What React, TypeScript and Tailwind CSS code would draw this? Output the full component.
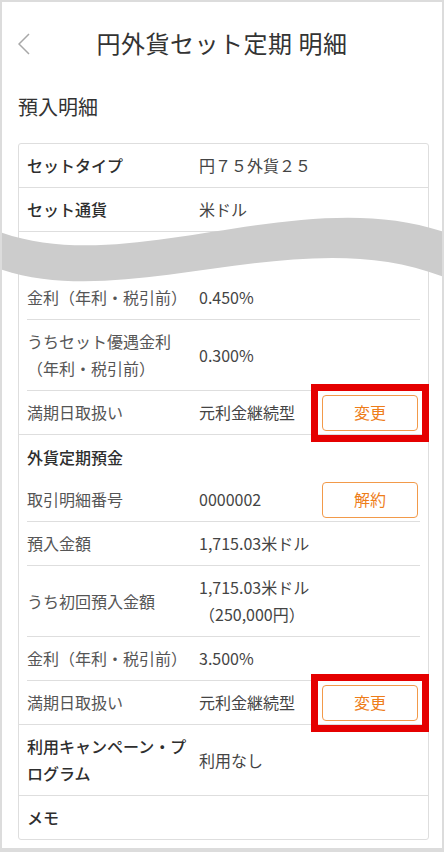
import React from 'react';

const font = { fontFamily: '"Noto Sans CJK JP", "Noto Sans", sans-serif' };

function ActionButton({ label, highlight }: { label: string; highlight?: boolean }) {
  return (
    <div className="relative shrink-0 -my-[5px] mr-[2px]">
      <button className="block w-[96px] h-[36px] rounded-[4px] border border-[#f29a4a] bg-white text-[16px] text-[#ee7d1a]">
        {label}
      </button>
      {/* red annotation box */}
      {highlight && <div className="absolute -inset-[11px] border-[7px] border-[#e50000] pointer-events-none" />}
    </div>
  );
}

function Row({
  label,
  value,
  strong,
  action,
  inset,
  last,
}: {
  label: React.ReactNode;
  value?: React.ReactNode;
  strong?: boolean;
  action?: React.ReactNode;
  inset?: boolean;
  last?: boolean;
}) {
  return (
    <div
      className={`flex items-center min-h-[43px] py-[8px] leading-[27px] text-[16px] ${inset ? '' : 'px-[8px]'} ${
        last ? '' : 'border-b border-[#dedede]'
      }`}
    >
      <div className={`w-[172px] shrink-0 pr-[4px] ${strong ? 'font-medium text-[#2e2e2e]' : 'text-[#555]'}`}>{label}</div>
      <div className="flex-1 text-[#444]">{value}</div>
      {action}
    </div>
  );
}

function GroupHeader({ title, h }: { title: string; h: string }) {
  return <div className={`flex items-center ${h} text-[16px] font-medium text-[#2e2e2e]`}>{title}</div>;
}

export default function App() {
  return (
    <div
      className="relative w-[444px] h-[852px] overflow-hidden bg-white border-[#dcdcdc] border-t-2 border-l-2 border-r-2 border-b-4"
      style={font}
    >
      {/* Header */}
      <header className="relative flex items-center justify-center h-[82px]">
        <svg className="absolute left-[16px] top-[31px]" width="12" height="22" viewBox="0 0 12 22" fill="none">
          <polyline points="11,1 1,11 11,21" stroke="#a8a8a8" strokeWidth="1.5" />
        </svg>
        <h1 className="text-[24px] text-[#333] tracking-[0.5px]">円外貨セット定期 明細</h1>
      </header>

      <h2 className="mt-[9px] ml-[16px] text-[20px] leading-[28px] text-[#333]">預入明細</h2>

      {/* Detail card */}
      <div className="mt-[22px] ml-[16px] w-[411px] rounded-[3px] border border-[#dedede]">
        <Row label="セットタイプ" value="円７５外貨２５" strong />
        <Row label="セット通貨" value="米ドル" strong />

        <div className="px-[8px] border-b border-[#dedede]">
          <GroupHeader title="円定期預金" h="h-[44px]" />
          <Row inset label="金利（年利・税引前）" value="0.450%" />
          <Row inset label="うちセット優遇金利（年利・税引前）" value="0.300%" />
          <Row inset last label="満期日取扱い" value="元利金継続型" action={<ActionButton label="変更" highlight />} />
        </div>

        <div className="px-[8px] border-b border-[#dedede]">
          <GroupHeader title="外貨定期預金" h="h-[43px]" />
          <Row inset label="取引明細番号" value="0000002" action={<ActionButton label="解約" />} />
          <Row inset label="預入金額" value="1,715.03米ドル" />
          <Row
            inset
            label="うち初回預入金額"
            value={
              <>
                <div>1,715.03米ドル</div>
                <div>（250,000円）</div>
              </>
            }
          />
          <Row inset label="金利（年利・税引前）" value="3.500%" />
          <Row inset last label="満期日取扱い" value="元利金継続型" action={<ActionButton label="変更" highlight />} />
        </div>

        <Row label="利用キャンペーン・プログラム" value="利用なし" strong />
        <Row label="メモ" strong last />
      </div>

      {/* Torn / omitted section wave */}
      <svg className="absolute -left-[2px] top-[198px]" width="444" height="100" viewBox="0 0 444 100">
        <path d="M0,32 C130,79 300,-17 444,32 L444,77 C300,20 130,113 0,69 Z" fill="#cccccc" />
      </svg>
    </div>
  );
}
